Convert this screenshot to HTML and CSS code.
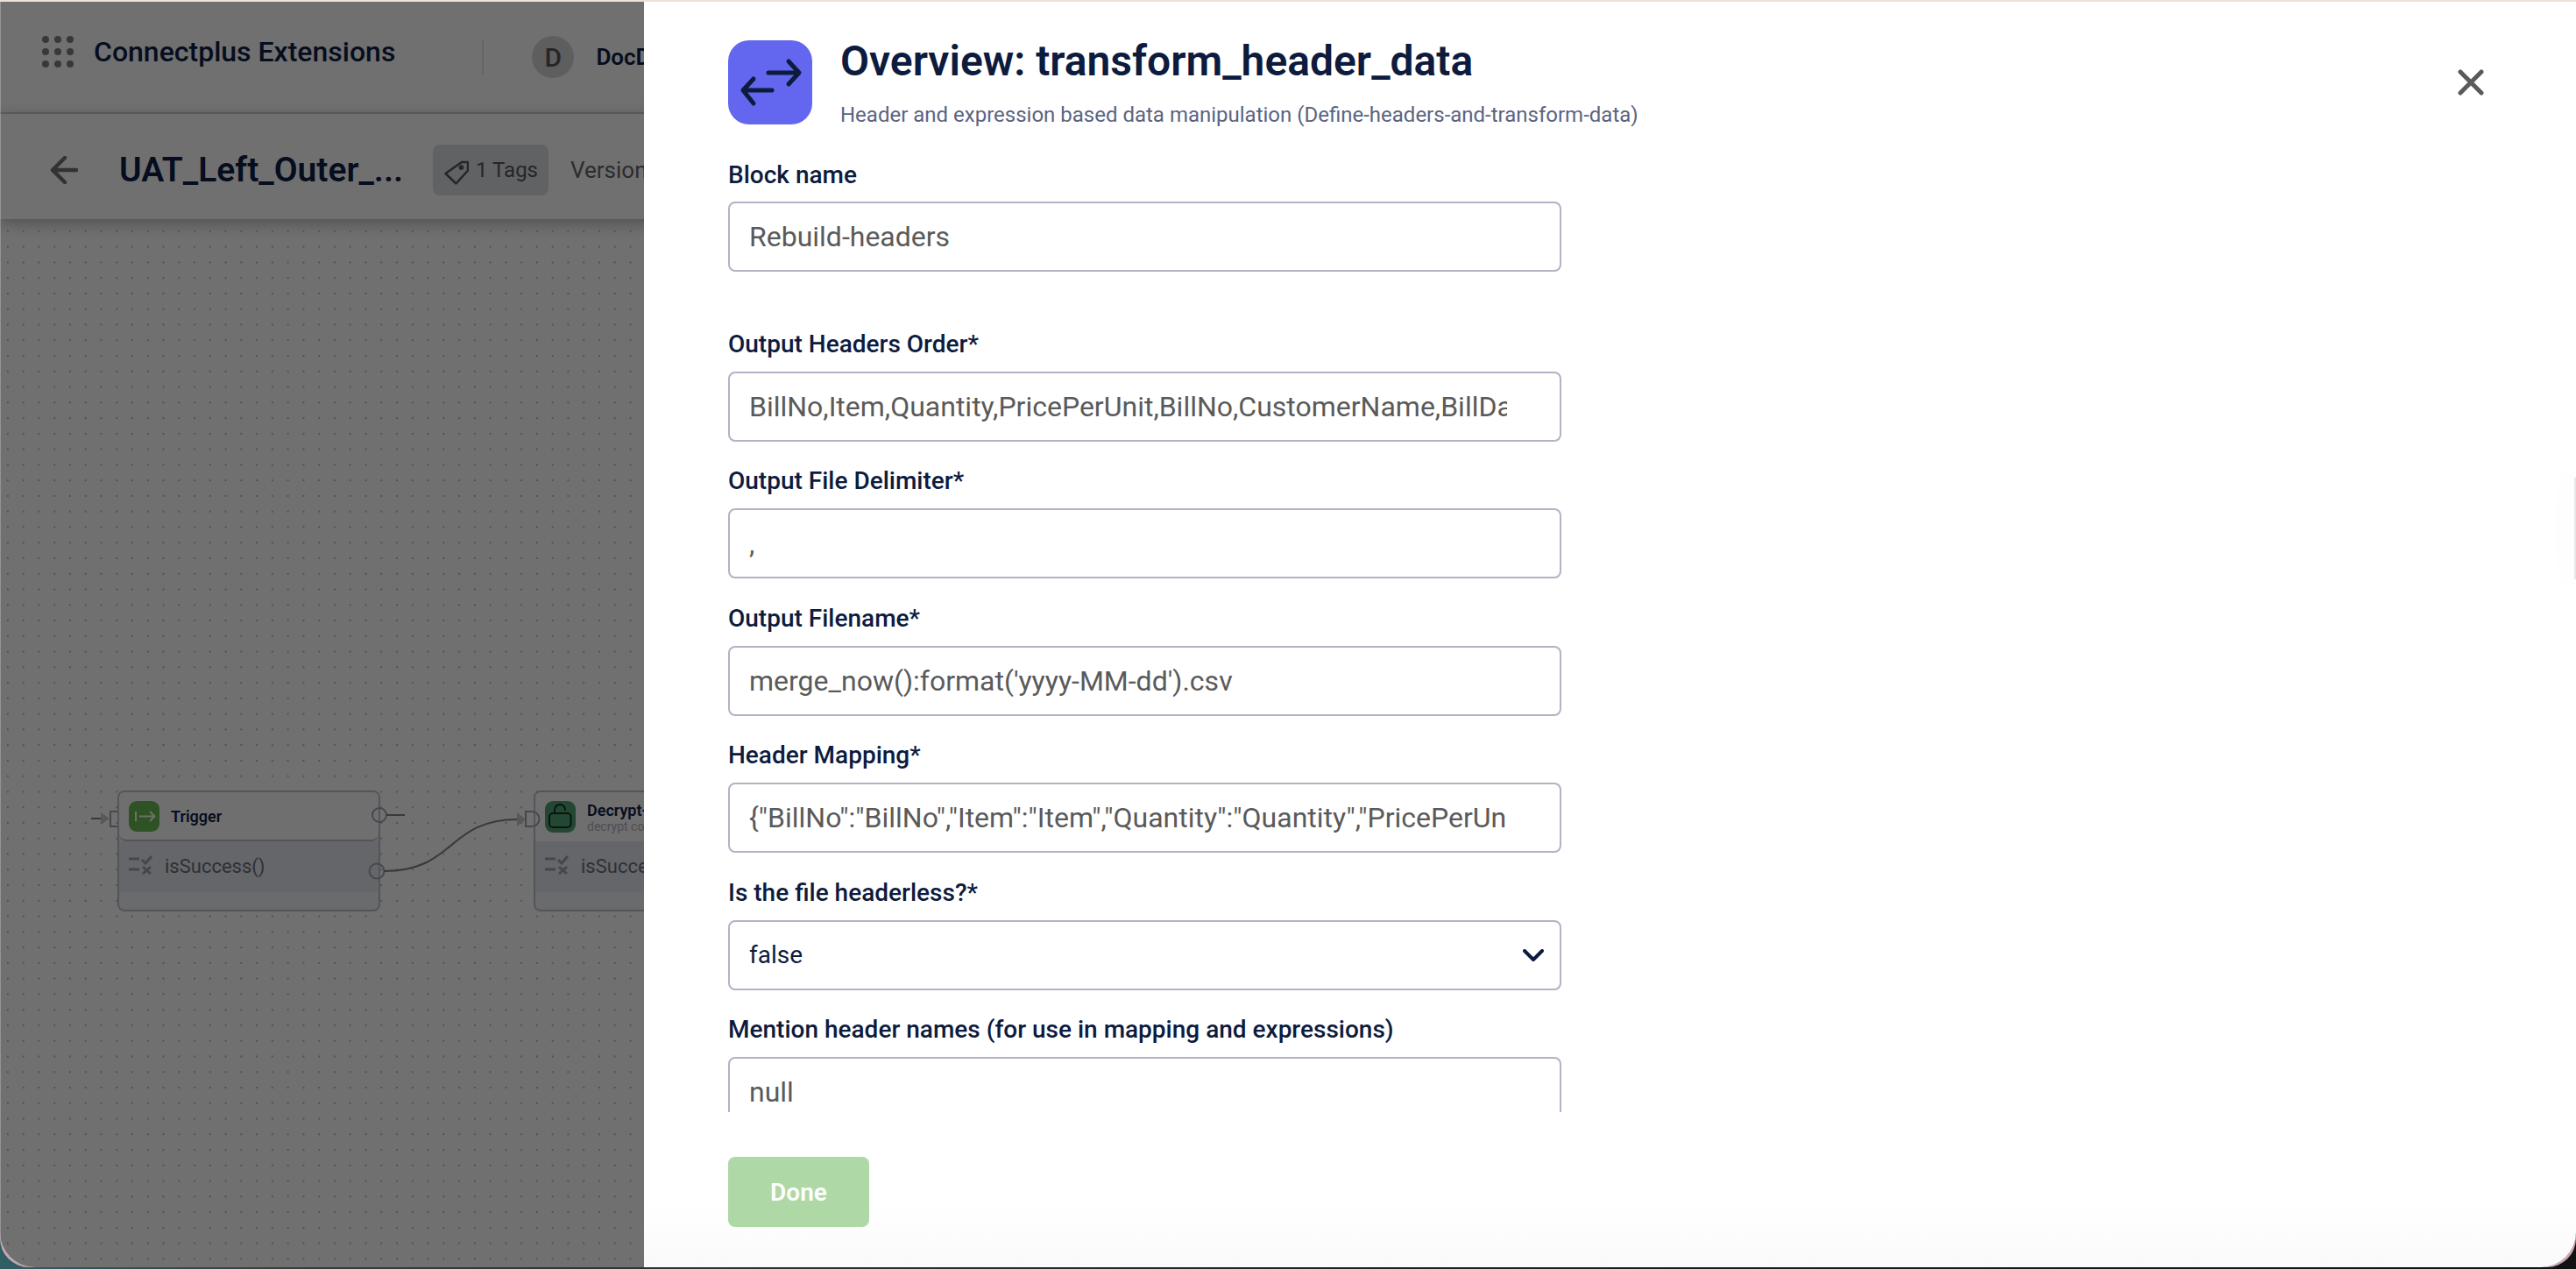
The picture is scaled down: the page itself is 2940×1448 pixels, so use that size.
FILE: index.html
```html
<!DOCTYPE html>
<html lang="en">
<head>
  <meta charset="UTF-8">
  <title>Connectplus Extensions</title>
  <link rel="stylesheet" href="styles.css">
</head>
<body>
  <div class="window">
    <div class="app">
      <div class="topbar">
        <div class="brand">
          <svg class="grid-icon" width="36" height="36" viewBox="0 0 36 36">
            <circle cx="4" cy="4" r="4"/><circle cx="18" cy="4" r="4"/><circle cx="32" cy="4" r="4"/>
            <circle cx="4" cy="18" r="4"/><circle cx="18" cy="18" r="4"/><circle cx="32" cy="18" r="4"/>
            <circle cx="4" cy="32" r="4"/><circle cx="18" cy="32" r="4"/><circle cx="32" cy="32" r="4"/>
          </svg>
          <span class="brand-name">Connectplus Extensions</span>
        </div>
        <div class="topbar-divider"></div>
        <div class="avatar">D</div>
        <span class="org-name">DocDigitizer</span>
      </div>

      <div class="subbar">
        <svg class="back-icon" width="32" height="32" viewBox="0 0 32 32">
          <path d="M30 16H3M17 2 3 16l14 14"/>
        </svg>
        <span class="flow-title">UAT_Left_Outer_...</span>
        <div class="tag-chip">
          <svg class="tag-icon" width="28" height="28" viewBox="0 0 28 28">
            <path d="M1.500 15 13.500 26.500 27 11.500V2H20Z"/>
            <circle cx="19.500" cy="8" r="1.600"/>
          </svg>
          <span>1 Tags</span>
        </div>
        <span class="version">Version 1</span>
      </div>

      <div class="canvas">
        <div class="node node-trigger">
          <div class="node-head">
            <div class="node-icon icon-green">
              <svg width="35" height="35" viewBox="0 0 35 35"><path d="M8 12V23M12 17.500H29M24 12l5.500 5.500L24 23"/></svg>
            </div>
            <div class="node-name">Trigger</div>
          </div>
          <div class="node-body">
            <svg class="check-icon" width="27" height="22" viewBox="0 0 27 22"><path d="M0 4H12M0 16H12M15 5l4 4 7-8M16 13l9 8M25 13l-9 8"/></svg>
            <span>isSuccess()</span>
          </div>
        </div>

        <div class="node node-decrypt">
          <div class="node-head">
            <div class="node-icon icon-teal">
              <svg width="35" height="36" viewBox="0 0 35 36"><rect x="5" y="14" width="24.500" height="16" rx="4"/><path d="M11 14V10a6 6 0 0 1 12 0v1"/></svg>
            </div>
            <div class="node-text">
              <div class="node-name">Decrypt-file</div>
              <div class="node-sub">decrypt contents</div>
            </div>
          </div>
          <div class="node-body">
            <svg class="check-icon" width="27" height="22" viewBox="0 0 27 22"><path d="M0 4H12M0 16H12M15 5l4 4 7-8M16 13l9 8M25 13l-9 8"/></svg>
            <span>isSuccess()</span>
          </div>
        </div>

        <svg class="wires" width="735" height="1196" viewBox="0 0 735 1196">
          <path class="wire" d="M104 686H118"/>
          <path class="head" d="M115 679l10 7-10 7z"/>
          <path class="port" d="M134 678H126V695H134"/>
          <circle class="port" cx="433" cy="682" r="8"/>
          <path class="wire" d="M441 682H462"/>
          <circle class="port" cx="430" cy="746" r="8.500"/>
          <path class="wire" d="M438 746C520 746 510 687 591 687"/>
          <path class="head" d="M590 679l10 8-10 8z"/>
          <path class="port" d="M600 678H607a8.500 8.500 0 0 1 0 17H600Z"/>
        </svg>
      </div>
    </div>

    <div class="backdrop"></div>

    <div class="drawer">
      <svg class="close-icon" width="30" height="30" viewBox="0 0 30 30"><path d="M3 3 27 27M27 3 3 27"/></svg>

      <div class="drawer-head">
        <div class="drawer-icon">
          <svg width="96" height="96" viewBox="0 0 96 96"><path d="M46 37H80M69 24 81 37 69 50M50 57H18M29 44 17 57 29 72"/></svg>
        </div>
        <div class="drawer-titles">
          <h1>Overview: transform_header_data</h1>
          <p>Header and expression based data manipulation (Define-headers-and-transform-data)</p>
        </div>
      </div>

      <form class="form">
        <div class="field field-first">
          <label for="f1">Block name</label>
          <input id="f1" type="text" value="Rebuild-headers">
        </div>
        <div class="field">
          <label for="f2">Output Headers Order*</label>
          <input id="f2" type="text" value="BillNo,Item,Quantity,PricePerUnit,BillNo,CustomerName,BillDate,Total">
        </div>
        <div class="field">
          <label for="f3">Output File Delimiter*</label>
          <input id="f3" type="text" value=",">
        </div>
        <div class="field">
          <label for="f4">Output Filename*</label>
          <input id="f4" type="text" value="merge_now():format('yyyy-MM-dd').csv">
        </div>
        <div class="field">
          <label for="f5">Header Mapping*</label>
          <input id="f5" type="text" value='{"BillNo":"BillNo","Item":"Item","Quantity":"Quantity","PricePerUnit":"PricePerUnit"}'>
        </div>
        <div class="field">
          <label for="f6">Is the file headerless?*</label>
          <div class="select-wrap">
            <select id="f6"><option>false</option><option>true</option></select>
            <svg class="chevron" width="24" height="14" viewBox="0 0 24 14"><path d="M2 2 12 12 22 2"/></svg>
          </div>
        </div>
        <div class="field">
          <label for="f7">Mention header names (for use in mapping and expressions)</label>
          <input id="f7" type="text" value="null">
        </div>
      </form>

      <div class="drawer-foot">
        <button type="button" class="done-btn">Done</button>
      </div>
    </div>
  </div>
</body>
</html>
```

FILE: styles.css
```css
* { box-sizing: border-box; }

html, body {
  margin: 0;
  height: 100%;
  overflow: hidden;
}

body {
  position: relative;
  font-family: 'Roboto', 'Liberation Sans', sans-serif;
  color: #0d1b3e;
  background: linear-gradient(90deg, #2f5f63 0%, #3a3a3a 12%, #222 50%, #111 100%);
}

/* pink sliver that shows in the rounded corners */
body::before {
  content: '';
  position: absolute;
  top: 0;
  left: 0;
  width: 100%;
  height: 1446px;
  border-radius: 0 0 33px 33px;
  background: #c9a5b3;
}

.window {
  position: relative;
  height: 1446px;
  border-top: 2px solid #f0e0d5;
  border-radius: 0 0 40px 40px;
  overflow: hidden;
  background: #e0e0e0;
}

.app {
  height: 100%;
  display: flex;
  flex-direction: column;
}

/* top bars */
.topbar {
  height: 128px;
  flex: none;
  display: flex;
  align-items: center;
  padding-left: 48px;
  border-bottom: 2px solid #c0c0c0;
}

.brand {
  display: flex;
  align-items: center;
  gap: 23px;
  margin-bottom: 12px;
}

.grid-icon { fill: #707070; }

.brand-name {
  font-size: 32px;
  font-weight: 500;
}

.topbar-divider {
  width: 2px;
  height: 40px;
  margin-left: 99px;
  background: #cacaca;
}

.avatar {
  width: 48px;
  height: 48px;
  margin-left: 55px;
  border-radius: 50%;
  background: #bcbdbf;
  color: #4c4c4c;
  font-size: 30px;
  font-weight: 500;
  display: flex;
  align-items: center;
  justify-content: center;
}

.org-name {
  margin-left: 25px;
  font-size: 26px;
  font-weight: 600;
}

.subbar {
  height: 120px;
  flex: none;
  display: flex;
  align-items: center;
  padding: 8px 0 0 57px;
  background: #e0e0e0;
  box-shadow: 0 4px 16px rgba(0,0,0,0.3);
  position: relative;
}

.back-icon {
  fill: none;
  stroke: #646464;
  stroke-width: 4.500;
  stroke-linecap: round;
  stroke-linejoin: round;
}

.flow-title {
  margin-left: 47px;
  font-size: 39px;
  font-weight: 600;
}

.tag-chip {
  height: 58px;
  margin-left: 34px;
  padding: 0 12px 0 13px;
  display: flex;
  align-items: center;
  gap: 8px;
  border-radius: 8px;
  background: #c3c4c7;
  color: #4c4c50;
  font-size: 24px;
}

.tag-icon {
  fill: none;
  stroke: #4c4c50;
  stroke-width: 2.500;
  stroke-linejoin: round;
  margin-top: 6px;
}

.version {
  margin-left: 25px;
  font-size: 26px;
  color: #58585c;
}

/* flow canvas */
.canvas {
  flex: 1;
  position: relative;
  background-image: radial-gradient(circle, #a4a4a4 1px, transparent 1.400px);
  background-size: 17.780px 17.780px;
  background-position: 0 5px;
}

.wires {
  position: absolute;
  left: 0;
  top: -2px;
}

.wire { fill: none; stroke: #70737c; stroke-width: 2; }
.port { fill: none; stroke: #8c909e; stroke-width: 2; }
.head { fill: #b0b0b0; }

.node {
  position: absolute;
  top: 652px;
  width: 300px;
  height: 138px;
  border: 2px solid #a8a9b6;
  border-radius: 8px;
  background: #d4d6da;
  overflow: hidden;
}

.node-trigger { left: 134px; }
.node-decrypt { left: 609px; }

.node-head {
  height: 56px;
  display: flex;
  align-items: center;
  gap: 13px;
  padding-left: 11px;
  background: #dedede;
}

.node-trigger .node-head {
  border-bottom: 2px solid #a8a9b6;
  border-radius: 0 0 8px 8px;
}

.node-icon {
  width: 35px;
  height: 35px;
  flex: none;
  border-radius: 9px;
}

.icon-green { background: #5fa548; }
.icon-green svg { fill: none; stroke: #d4e6cc; stroke-width: 2; }
.icon-teal { background: #468f66; height: 36px; }
.icon-teal svg { fill: none; stroke: #14291e; stroke-width: 2; }

.node-name {
  font-size: 18px;
  font-weight: 600;
}

.node-sub {
  font-size: 14px;
  color: #9a9ca8;
}

.node-body {
  height: 58px;
  padding: 16px 0 0 11px;
  display: flex;
  align-items: flex-start;
  gap: 14px;
  font-size: 22px;
  color: #5c606c;
  background: #cbcdd3;
}

.check-icon {
  flex: none;
  fill: none;
  stroke: #8a8e9e;
  stroke-width: 3;
}

/* overlay and drawer */
.backdrop {
  position: absolute;
  inset: 0;
  background: rgba(0,0,0,0.5);
  border-left: 1px solid rgba(255,255,255,0.25);
}

.drawer {
  position: absolute;
  top: 0;
  right: 0;
  bottom: 0;
  width: 2205px;
  padding-left: 96px;
  display: flex;
  flex-direction: column;
  background: linear-gradient(#fff 95%, #fafafa);
}

/* faint mark on the window's right edge */
.drawer::after {
  content: '';
  position: absolute;
  right: 0;
  top: 543px;
  width: 2px;
  height: 116px;
  background: #e6e6e6;
  box-shadow: 0 0 40px 14px rgba(0,0,0,0.012);
}

.close-icon {
  position: absolute;
  top: 77px;
  left: 2070px;
  fill: none;
  stroke: #5a5a5a;
  stroke-width: 5;
  stroke-linecap: round;
}

.drawer-head {
  height: 182px;
  flex: none;
  display: flex;
  gap: 32px;
  padding-top: 44px;
}

.drawer-icon {
  width: 96px;
  height: 96px;
  flex: none;
  border-radius: 24px;
  background: #6366ee;
}

.drawer-icon svg {
  fill: none;
  stroke: #0d1b3e;
  stroke-width: 5;
  stroke-linecap: round;
  stroke-linejoin: round;
}

.drawer-titles h1 {
  margin: 0;
  font-size: 48px;
  line-height: 48px;
  font-weight: 600;
}

.drawer-titles p {
  margin: 22px 0 0;
  font-size: 24px;
  line-height: 30px;
  color: #5b6480;
}

.form {
  flex: 1;
  min-height: 0;
  width: 951px;
  overflow: hidden;
  display: flex;
  flex-direction: column;
  gap: 29.400px;
}

.field {
  flex: none;
  display: flex;
  flex-direction: column;
  gap: 15px;
}

.field-first {
  gap: 14px;
  margin-bottom: 37.600px;
}

.field label {
  font-size: 28px;
  line-height: 32px;
  font-weight: 500;
}

.field input,
.field select {
  width: 100%;
  height: 80px;
  padding: 0 60px 0 22px;
  border: 2px solid #b0b4c4;
  border-radius: 8px;
  background: #fff;
  font-family: inherit;
  font-size: 32px;
  color: #5a5a5a;
  outline: none;
}

.field select {
  appearance: none;
  -webkit-appearance: none;
  font-size: 28px;
  color: #0d1b3e;
}

.select-wrap { position: relative; }

.chevron {
  position: absolute;
  top: 33px;
  right: 20px;
  fill: none;
  stroke: #0d1b3e;
  stroke-width: 4;
  stroke-linecap: round;
  stroke-linejoin: round;
}

.drawer-foot {
  height: 177px;
  flex: none;
  padding-top: 51px;
}

.done-btn {
  width: 161px;
  height: 80px;
  border: none;
  border-radius: 8px;
  background: #afd8a7;
  color: #fff;
  font-family: inherit;
  font-size: 28px;
  font-weight: 600;
}
```
